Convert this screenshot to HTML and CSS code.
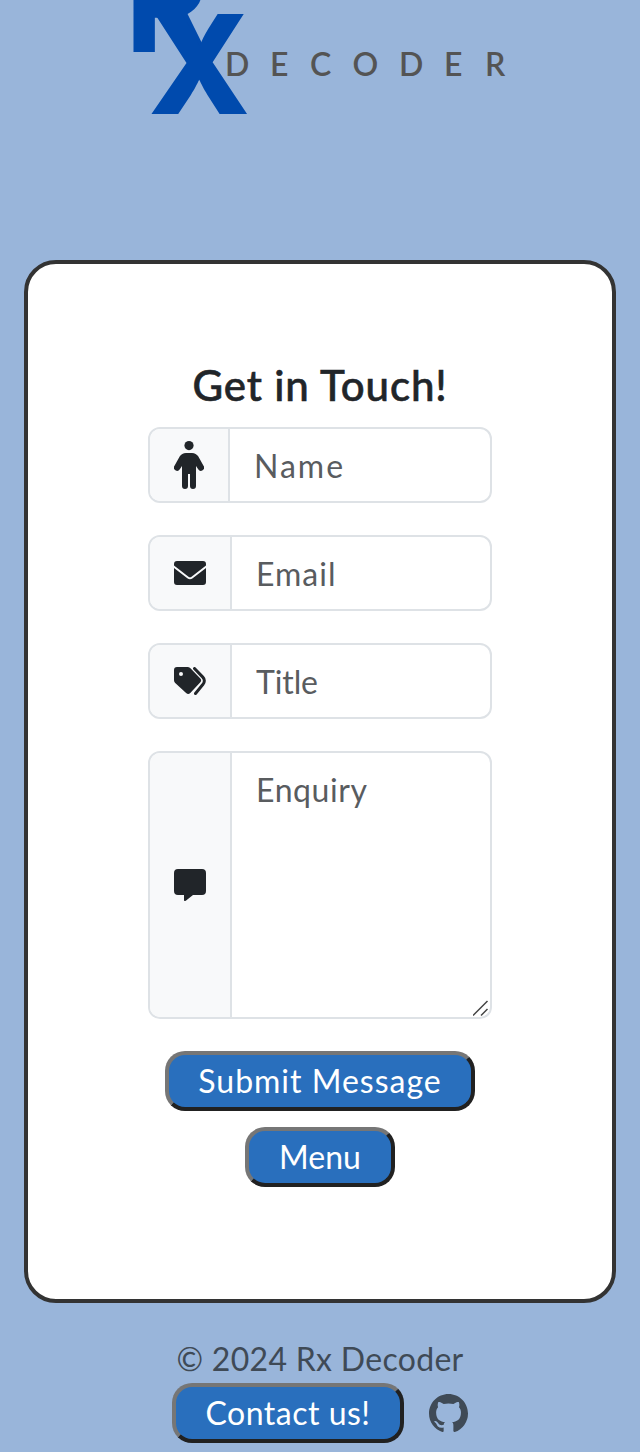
FILE: index.html
```html
<!DOCTYPE html>
<html lang="en">
<head>
<meta charset="utf-8">
<title>Rx Decoder</title>
<link rel="stylesheet" href="styles.css">
</head>
<body>
<header class="header">
  <svg class="logo" viewBox="0 0 640 130" role="img" aria-label="Rx Decoder">
    <g class="logo-mark">
      <text x="126.500" y="52" textLength="82" lengthAdjust="spacingAndGlyphs">R</text>
      <text x="148.200" y="114" textLength="102" lengthAdjust="spacingAndGlyphs">X</text>
    </g>
    <text class="logo-word" x="225 270 310 352.500 399 444 485" y="76">DECODER</text>
  </svg>
</header>
<main class="card">
  <h1 class="title">Get in Touch!</h1>
  <form class="form">
    <div class="group">
      <span class="addon addon-person"><svg width="30" height="48" viewBox="0 0 30 48"><circle cx="15" cy="4.600" r="4.600"/><path d="M12 12h6c2.800 0 4.800 1.300 6.200 3.200l5.300 9.500a3.100 3.100 0 0 1-5.300 3.600L22 25V45a3 3 0 0 1-6 0V33h-2v12a3 3 0 0 1-6 0V25l-2.200 3.300a3.100 3.100 0 0 1-5.300-3.600l5.300-9.500C7.200 13.300 9.200 12 12 12z"/></svg></span>
      <input class="field t-name" type="text" placeholder="Name">
    </div>
    <div class="group">
      <span class="addon"><svg width="32" height="24" viewBox="0 0 32 24"><path d="M3 0h26a3 3 0 0 1 3 3v1.500L17.500 15.800a2.500 2.500 0 0 1-3 0L0 4.500V3a3 3 0 0 1 3-3z M0 7l13.300 10.200a4.500 4.500 0 0 0 5.400 0L32 7v14a3 3 0 0 1-3 3H3a3 3 0 0 1-3-3z"/></svg></span>
      <input class="field t-email" type="email" placeholder="Email">
    </div>
    <div class="group">
      <span class="addon"><svg width="32" height="28" viewBox="0 0 32 28"><path fill-rule="evenodd" d="M3 0h10.500a4 4 0 0 1 2.700 1.100l9.900 10.200a3 3 0 0 1 0 4.200L16.300 26a3 3 0 0 1-4.200 0L1.200 16.100A4 4 0 0 1 0 13.300V3a3 3 0 0 1 3-3z M7 5a2 2 0 1 0 0 4a2 2 0 0 0 0-4z"/><path class="tag-line" d="M20.500 1.500l8.300 8.600a5.300 5.300 0 0 1 0 7.500L21.500 26.500"/></svg></span>
      <input class="field t-title" type="text" placeholder="Title">
    </div>
    <div class="group group-tall">
      <span class="addon"><svg width="32" height="32" viewBox="0 0 32 32"><path d="M4 0h24a4 4 0 0 1 4 4v18a4 4 0 0 1-4 4h-9l-7.200 5.800C11 32.300 10 32 10 31.200V26H4a4 4 0 0 1-4-4V4a4 4 0 0 1 4-4z"/></svg></span>
      <textarea class="field t-enquiry" placeholder="Enquiry"></textarea>
      <svg class="grip" width="17" height="17" viewBox="0 0 17 17"><path d="M0 15.500L14.500 1M8 15.500l6.500-6.500"/></svg>
    </div>
    <button class="btn btn-submit" type="button">Submit Message</button>
    <button class="btn btn-menu" type="button">Menu</button>
  </form>
</main>
<footer class="footer">
  <p class="copy">© 2024 Rx Decoder</p>
  <div class="links">
    <button class="btn btn-contact" type="button">Contact us!</button>
    <svg class="github" width="39" height="39" viewBox="0 0 16 16"><path d="M8 0C3.580 0 0 3.580 0 8c0 3.540 2.290 6.530 5.470 7.590.4.070.55-.17.55-.38 0-.19-.01-.82-.01-1.490-2.010.37-2.530-.49-2.690-.94-.09-.23-.48-.94-.82-1.130-.28-.15-.68-.52-.01-.53.63-.01 1.080.58 1.230.82.72 1.210 1.870.87 2.330.66.070-.52.28-.87.51-1.070-1.780-.2-3.640-.89-3.640-3.950 0-.87.31-1.590.82-2.150-.08-.2-.36-1.020.08-2.120 0 0 .67-.21 2.200.82.64-.18 1.320-.27 2-.27s1.360.09 2 .27c1.530-1.040 2.200-.82 2.200-.82.44 1.100.16 1.920.08 2.120.51.56.82 1.270.82 2.150 0 3.070-1.870 3.750-3.650 3.950.29.25.54.73.54 1.480 0 1.070-.01 1.930-.01 2.200 0 .21.15.46.55.38A8.010 8.010 0 0 0 16 8c0-4.420-3.580-8-8-8z"/></svg>
  </div>
</footer>
</body>
</html>
```
FILE: styles.css
```css
* { box-sizing: border-box; }

body {
  margin: 0;
  height: 1452px;
  overflow: hidden;
  background: #99b5da;
  color: #212529;
  font: 32px/48px Lato, "Open Sans", sans-serif;
}

.header { height: 260px; }
.logo { display: block; width: 640px; height: 130px; }
.logo-mark { fill: #004aad; font: 800 137.5px Inter, sans-serif; }
.logo-word { fill: #545454; font: 600 32px Lato, sans-serif; }

.card {
  height: 1043px;
  margin: 0 24px;
  padding: 96px 120px 0;
  border: 4px solid #333;
  border-radius: 32px;
  background: #fff;
}

.title {
  margin: 0 -20px 16px;
  font-size: 42px;
  line-height: 51px;
  font-weight: 500;
  text-align: center;
  white-space: nowrap;
  letter-spacing: 0.9px;
  -webkit-text-stroke: 0.6px #212529;
}

.form { display: flex; flex-direction: column; align-items: center; }

.group {
  position: relative;
  display: flex;
  width: 344px;
  height: 76px;
  margin-bottom: 32px;
  border: 2px solid #dee2e6;
  border-radius: 12px;
  overflow: hidden;
  background: #fff;
}
.group-tall { height: 268px; }

.addon {
  flex: none;
  display: flex;
  align-items: center;
  justify-content: center;
  width: 82px;
  border-right: 2px solid #dee2e6;
  background: #f8f9fa;
}
.addon-person { width: 80px; }
.addon svg { fill: #212529; }
.addon .tag-line { fill: none; stroke: #212529; stroke-width: 3; stroke-linecap: round; }

.field {
  flex: 1;
  min-width: 0;
  padding: 13px 24px 11px;
  border: 0;
  outline: 0;
  background: transparent;
  color: #212529;
  font: inherit;
  resize: none;
}
.field::placeholder { color: #595c5f; opacity: 1; }
.t-name { letter-spacing: 2px; }
.t-email { letter-spacing: 1px; }
.t-title { letter-spacing: -0.1px; }
.t-enquiry { letter-spacing: 0.6px; }

.grip { position: absolute; right: 0; bottom: 0; fill: none; stroke: #444; stroke-width: 1.5; }

.btn {
  height: 60px;
  padding: 0;
  border: 4px solid;
  border-color: #767676 #212121 #212121 #767676;
  border-radius: 20px;
  background: #296fbd;
  color: #fff;
  font: inherit;
  white-space: nowrap;
}
.btn-submit { width: 310px; margin-bottom: 16px; letter-spacing: 1px; }
.btn-menu { width: 150px; letter-spacing: 0; }
.btn-contact { width: 232px; letter-spacing: 0.5px; }

.footer { padding-top: 32px; color: #3f4a56; }
.copy { margin: 0; text-align: center; letter-spacing: 0.3px; }
.links { display: flex; align-items: center; justify-content: center; gap: 25px; }
.github { fill: #3f4a56; }
```
